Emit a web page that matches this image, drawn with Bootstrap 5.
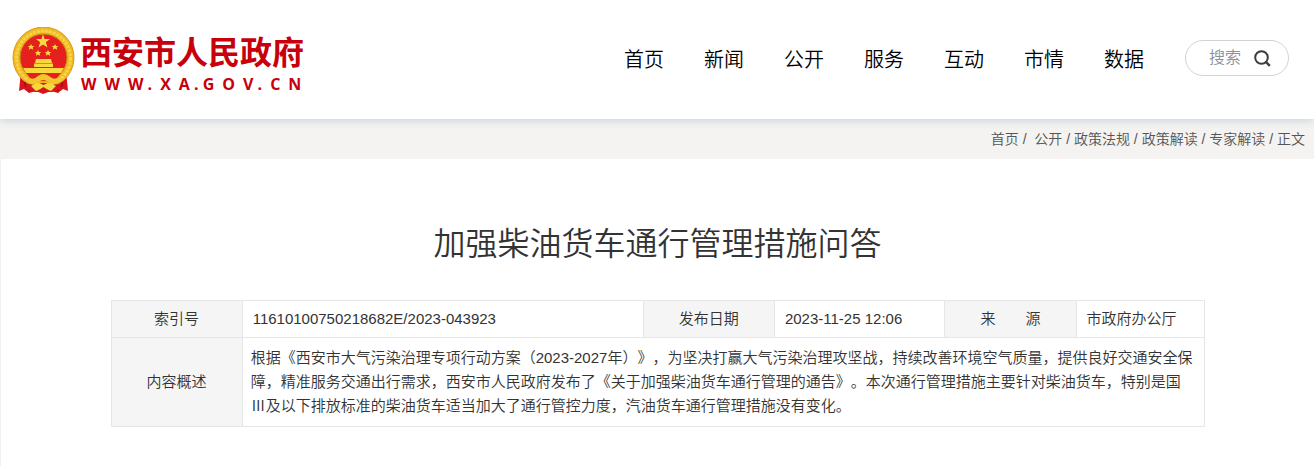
<!DOCTYPE html>
<html lang="zh-CN">
<head>
<meta charset="utf-8">
<meta name="viewport" content="width=device-width, initial-scale=1">
<title>加强柴油货车通行管理措施问答</title>
<link href="https://cdn.jsdelivr.net/npm/bootstrap@5.3.0/dist/css/bootstrap.min.css" rel="stylesheet">
<style>
body { font-family: "Liberation Sans", "Noto Sans CJK SC", sans-serif; font-weight: 350; color: #333; background: #fff; text-spacing-trim: space-all; }
.site-header { min-height: 119px; padding: 0 25px 0 12px; box-shadow: 0 2px 8px rgba(140, 170, 195, .4); position: relative; z-index: 1; }
.brand-link { color: #c7000b; padding-top: 3px; gap: 5px; }
.brand-text { padding-top: 4px; }
.brand-name { font: 700 32px/36px "Noto Sans CJK SC", sans-serif; }
.brand-url { font: 700 16px/22px "Open Sans", "Noto Sans", sans-serif; white-space: nowrap; padding: 5px 0 0 1px; }
.main-nav { gap: 40px; margin-right: 41px; }
.main-nav a { font-size: 20px; line-height: 30px; color: #000; }
.search-box { width: 104px; height: 36px; border: 1px solid #d2d2d2; border-radius: 18px; padding: 0 17px 0 23px; margin-top: -3px; }
.search-box input { min-width: 0; font-size: 16px; font-weight: 350; color: #333; outline: 0; }
.search-box input::placeholder { color: #87929a; opacity: 1; }
.crumb-bar { background: #f4f3f1; font-size: 14px; line-height: 20px; padding: 10px 9px; color: #555; }
.crumb-bar a { color: #555; }
.article { border-left: 1px solid #f1f1f1; padding: 61px 16px 39px; }
.article h1 { font-size: 32px; line-height: 48px; font-weight: 350; margin-bottom: 32px; }
.info-table { width: 100%; max-width: 1094px; font-size: 15px; line-height: 24px; table-layout: fixed; border-collapse: collapse; }
.info-table th, .info-table td { border: 1px solid #e6e6e6; padding: 6px 10px; vertical-align: middle; }
.info-table th { background: #f5f5f5; font-weight: 350; text-align: center; }
.info-table td.summary { padding: 8px; }
</style>
</head>
<body>
<header class="site-header bg-white d-flex align-items-center justify-content-between">
  <a class="brand-link d-flex align-items-center text-decoration-none" href="#">
    <svg width="63" height="68" viewBox="0 0 63 68" aria-hidden="true">
      <path d="M9 44 L7 64 L12 62 L17 66 L24 64 L31 67 L39 64 L46 66 L51 62 L56 64 L54 44Z" fill="#d9141c"/>
      <path d="M12 52 L14 60 M19 55 L17 64 M44 55 L46 64 M51 52 L49 60" stroke="#9e0a10" stroke-width="2"/>
      <path d="M12 54 A30.500 30.500 0 1 1 51 54 L46 57 H17Z" fill="#eebb22" stroke="#d99a16"/>
      <circle cx="31.500" cy="31" r="27" fill="none" stroke="#f7d24a" stroke-width="3" stroke-dasharray="3 1"/>
      <circle cx="31.500" cy="30.500" r="23.500" fill="#e5201f" stroke="#c98c12"/>
      <path d="M31 7 L32.500 12 L38 12 L33.800 15.300 L35.500 20.500 L31 17.500 L26.500 20.500 L28.200 15.300 L24 12 L29.500 12Z" fill="#fbd93e"/>
      <g fill="#fbd93e">
        <path d="M19 17 l1 2 2.200 0 -1.600 1.600 .6 2.200 -2.200 -1.200 -2.200 1.200 .6 -2.200 -1.600 -1.600 2.200 0Z"/>
        <path d="M43 17 l1 2 2.200 0 -1.600 1.600 .6 2.200 -2.200 -1.200 -2.200 1.200 .6 -2.200 -1.600 -1.600 2.200 0Z"/>
        <path d="M26 23 l1 2 2.200 0 -1.600 1.600 .6 2.200 -2.200 -1.200 -2.200 1.200 .6 -2.200 -1.600 -1.600 2.200 0Z"/>
        <path d="M36 23 l1 2 2.200 0 -1.600 1.600 .6 2.200 -2.200 -1.200 -2.200 1.200 .6 -2.200 -1.600 -1.600 2.200 0Z"/>
        <path d="M24 32 H39 L40 36 H23Z M22 36.500 H41 V40 H22Z M11 41 H52 L49 46 H14Z"/>
      </g>
      <path d="M14 46 H49 L45 51 Q31 56 18 51Z" fill="#e5201f"/>
      <path d="M14 51 Q21 54 26 49 Q31 45 37 49 Q42 54 49 51 L46 56 Q40 58 35 54 Q31 52 28 54 Q22 58 17 56Z" fill="#f3c62e"/>
      <path d="M13 55 Q23 62 29 56 L34 56 Q40 62 50 55 L48 62 L40 65 H23 L15 62Z" fill="#d9141c"/>
      <path d="M19 59 Q26 54 31.500 58 Q37 54 44 59 L39 64 L31.500 61 L24 64Z" fill="#f7d83f"/>
      <path d="M27 63 L31.500 60 L36 63 L31.500 66Z" fill="#d9141c"/>
    </svg>
    <span class="brand-text">
      <span class="brand-name d-block">西安市人民政府</span>
      <span class="brand-url d-block">W&ensp;W&ensp;W .&ensp;X&ensp;A . G&ensp;O&ensp;V .&ensp;C&ensp;N</span>
    </span>
  </a>
  <div class="d-flex align-items-center">
    <nav class="main-nav d-flex" aria-label="主导航">
      <a class="text-decoration-none" href="#">首页</a>
      <a class="text-decoration-none" href="#">新闻</a>
      <a class="text-decoration-none" href="#">公开</a>
      <a class="text-decoration-none" href="#">服务</a>
      <a class="text-decoration-none" href="#">互动</a>
      <a class="text-decoration-none" href="#">市情</a>
      <a class="text-decoration-none" href="#">数据</a>
    </nav>
    <form class="search-box d-flex align-items-center" role="search">
      <input class="border-0 p-0 bg-transparent flex-grow-1 w-100" type="text" placeholder="搜索" aria-label="搜索">
      <button class="border-0 p-0 bg-transparent d-flex" type="button" aria-label="提交">
        <svg width="17" height="17" viewBox="0 0 17 17" fill="none" stroke="#3c3c3c" stroke-width="2"><circle cx="7.500" cy="7.500" r="6.300"/><path d="M11.500 11.500 L15.800 15.800" stroke-width="2.400"/></svg>
      </button>
    </form>
  </div>
</header>
<nav class="crumb-bar text-end" aria-label="当前位置"><a class="text-decoration-none" href="#">首页</a> / &nbsp;<a class="text-decoration-none" href="#">公开</a> / <a class="text-decoration-none" href="#">政策法规</a> / <a class="text-decoration-none" href="#">政策解读</a> / <a class="text-decoration-none" href="#">专家解读</a> / 正文</nav>
<main class="article">
  <h1 class="text-center">加强柴油货车通行管理措施问答</h1>
  <table class="info-table mx-auto">
    <colgroup><col style="width:12%"><col style="width:36.700%"><col style="width:12%"><col style="width:15.600%"><col style="width:12%"><col></colgroup>
    <tbody>
      <tr>
        <th scope="row">索引号</th><td>11610100750218682E/2023-043923</td>
        <th scope="row">发布日期</th><td>2023-11-25 12:06</td>
        <th scope="row">来　　源</th><td>市政府办公厅</td>
      </tr>
      <tr>
        <th scope="row">内容概述</th>
        <td class="summary" colspan="5">根据《西安市大气污染治理专项行动方案（2023-2027年）》，为坚决打赢大气污染治理攻坚战，持续改善环境空气质量，提供良好交通安全保障，精准服务交通出行需求，西安市人民政府发布了《关于加强柴油货车通行管理的通告》。本次通行管理措施主要针对柴油货车，特别是国Ⅲ及以下排放标准的柴油货车适当加大了通行管控力度，汽油货车通行管理措施没有变化。</td>
      </tr>
    </tbody>
  </table>
</main>
<script src="https://cdn.jsdelivr.net/npm/bootstrap@5.3.0/dist/js/bootstrap.bundle.min.js"></script>
</body>
</html>
